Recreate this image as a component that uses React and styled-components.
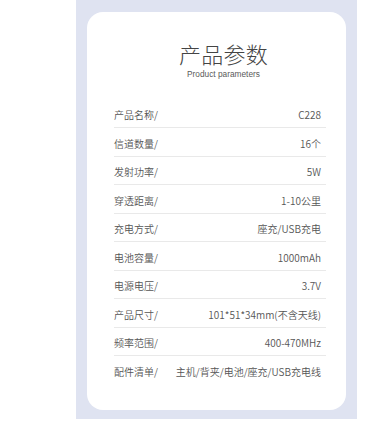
import React from "react";
import styled, { createGlobalStyle } from "styled-components";

const GlobalStyle = createGlobalStyle`
  html, body {
    margin: 0;
    padding: 0;
    background: #ffffff;
  }
  body {
    font-family: "Noto Sans CJK SC", "Noto Sans", sans-serif;
    -webkit-font-smoothing: antialiased;
  }
`;

const Page = styled.div`
  display: flex;
  padding-left: 76px;
`;

const Panel = styled.section`
  width: 281px;
  box-sizing: border-box;
  padding: 12px 11px 9px;
  background: #dfe3f1;
`;

const Card = styled.div`
  display: flex;
  flex-direction: column;
  box-sizing: border-box;
  padding: 28px 20px 26.5px 27px;
  background: #ffffff;
  border-radius: 16px;
`;

const Heading = styled.header`
  display: flex;
  flex-direction: column;
  align-items: center;
  gap: 3px;
  margin: 0 -7px 20.5px 0;
`;

const Title = styled.h1`
  margin: 0;
  font-size: 22px;
  line-height: 26px;
  font-weight: 300;
  color: #444444;
  letter-spacing: 0.3px;
`;

const Subtitle = styled.p`
  margin: 0;
  font-family: "Liberation Sans", Arial, sans-serif;
  font-size: 8.3px;
  line-height: 10px;
  color: #5a5a5a;
`;

const SpecList = styled.dl`
  display: flex;
  flex-direction: column;
  margin: 0;
`;

const SpecRow = styled.div`
  display: flex;
  justify-content: space-between;
  align-items: center;
  padding: 8.5px 5px 5px 0;
  font-size: 10px;
  line-height: 14px;
  font-weight: 350;
  color: #555555;
  border-bottom: 1px solid #e9e9e9;
  ${(p) => (p.$last ? "border-bottom: none;" : "")}
`;

const Label = styled.dt`
  margin: 0;
  white-space: nowrap;
`;

const Value = styled.dd`
  margin: 0;
  white-space: nowrap;
  text-align: right;
`;

const specs = [
  ["产品名称/", "C228"],
  ["信道数量/", "16个"],
  ["发射功率/", "5W"],
  ["穿透距离/", "1-10公里"],
  ["充电方式/", "座充/USB充电"],
  ["电池容量/", "1000mAh"],
  ["电源电压/", "3.7V"],
  ["产品尺寸/", "101*51*34mm(不含天线)"],
  ["频率范围/", "400-470MHz"],
  ["配件清单/", "主机/背夹/电池/座充/USB充电线"],
];

export default function App() {
  return (
    <>
      <GlobalStyle />
      <Page>
        <Panel>
          <Card>
            <Heading>
              <Title>产品参数</Title>
              <Subtitle>Product parameters</Subtitle>
            </Heading>
            <SpecList>
              {specs.map(([label, value], i) => (
                <SpecRow key={label} $last={i === specs.length - 1}>
                  <Label>{label}</Label>
                  <Value>{value}</Value>
                </SpecRow>
              ))}
            </SpecList>
          </Card>
        </Panel>
      </Page>
    </>
  );
}
